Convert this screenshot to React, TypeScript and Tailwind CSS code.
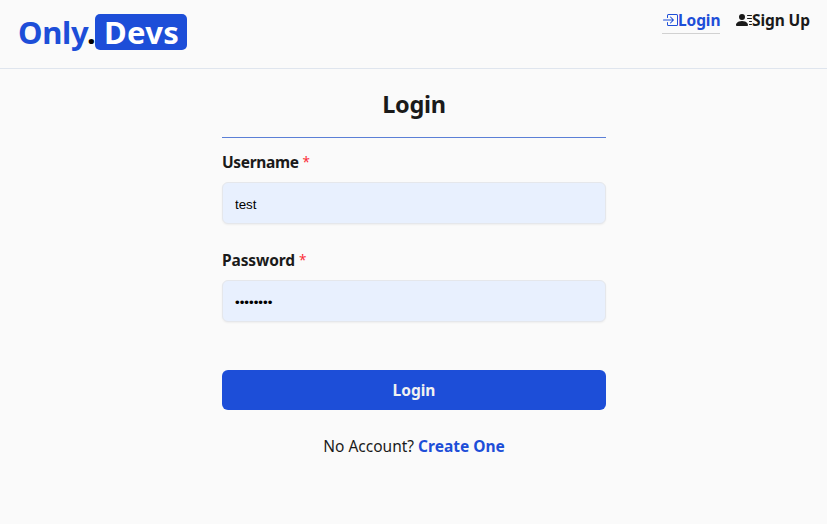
import { BsBoxArrowInRight, BsPersonLinesFill } from "react-icons/bs";

type FieldProps = { label: string; type: string; value: string; labelClass: string };

function Field({ label, type, value, labelClass }: FieldProps) {
  return (
    <label className="flex flex-col gap-2">
      <span className="flex h-6 items-center gap-1 leading-6">
        <span className={`text-[15.5px] font-bold whitespace-nowrap ${labelClass}`}>{label}</span>
        <span className="text-[13.5px] text-red-500">*</span>
      </span>
      <input
        type={type}
        defaultValue={value}
        className="h-[42px] w-full rounded-md border border-gray-200 bg-[#e8f0fe] px-3 pt-0.5 font-['Liberation_Sans',Arial,sans-serif] text-[13.333px] text-black shadow-[0_1px_2px_0_rgba(0,0,0,0.05)] outline-none"
      />
    </label>
  );
}

export default function App() {
  return (
    <div className="min-h-screen bg-[#fafafa] font-['Noto_Sans','Open_Sans',sans-serif] text-[#1a1a1a]">
      <header className="flex h-[69px] items-start justify-between border-b border-[#dfe5ee] pr-[17px] pl-[18px]">
        <div className="mt-[14px] flex h-9 items-center text-[31px] leading-9 font-bold">
          <span className="w-[69px] whitespace-nowrap tracking-[-0.3px] text-[#1d4ed8]">Only</span>
          <span className="w-2 text-black">.</span>
          <span className="flex h-9 w-[92px] items-center justify-center rounded-[5px] bg-[#1d4ed8] pl-px tracking-[0.3px] text-white">Devs</span>
        </div>
        <nav className="mt-2 flex gap-4 text-[15.5px] leading-6 font-bold">
          <a className="flex h-[26px] w-[58px] items-start border-b border-[#d1d1d1] whitespace-nowrap text-[#1d4ed8]">
            <BsBoxArrowInRight className="mt-1 size-4 shrink-0" />
            <span className="tracking-[-0.1px]">Login</span>
          </a>
          <a className="flex w-[74px] items-start whitespace-nowrap">
            <BsPersonLinesFill className="mt-1 size-4 shrink-0" />
            <span className="tracking-[-0.1px]">Sign Up</span>
          </a>
        </nav>
      </header>
      <main className="ml-[222px] flex w-96 flex-col">
        <h1 className="mt-[19px] h-8 text-center text-[23.5px] leading-8 font-bold tracking-[-0.3px]">Login</h1>
        <hr className="mt-[17px] border-[#5b7fd6]" />
        <form className="flex flex-col pt-3">
          <Field label="Username" type="text" value="test" labelClass="tracking-[-0.35px]" />
          <div className="h-6" />
          <Field label="Password" type="password" value="password" labelClass="tracking-[-0.12px]" />
          <button type="button" className="mt-12 h-10 rounded-md bg-[#1d4ed8] pt-0.5 text-[15.5px] font-bold text-[#f1f1f1]">Login</button>
        </form>
        <p className="mt-6 flex justify-center gap-1 text-[15.5px] leading-6 whitespace-nowrap">
          <span>No Account?</span>
          <a className="font-bold text-[#1d4ed8]">Create One</a>
        </p>
      </main>
    </div>
  );
}
